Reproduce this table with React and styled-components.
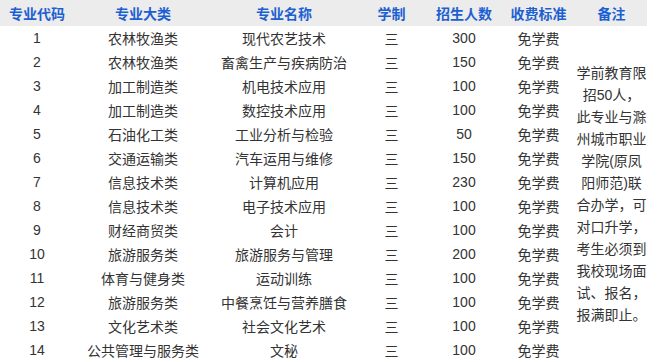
import styled, { createGlobalStyle } from 'styled-components';

const GlobalStyle = createGlobalStyle`
  body {
    margin: 0;
    background: #fff;
    font-family: "Liberation Sans", "Noto Sans CJK SC", sans-serif;
  }
`;

const columns = [
  { title: '专业代码', width: 74 },
  { title: '专业大类', width: 138 },
  { title: '专业名称', width: 144 },
  { title: '学制', width: 71 },
  { title: '招生人数', width: 74 },
  { title: '收费标准', width: 75 },
  { title: '备注', width: 71 }
];

const majors = [
  ['1', '农林牧渔类', '现代农艺技术', '300'],
  ['2', '农林牧渔类', '畜禽生产与疾病防治', '150'],
  ['3', '加工制造类', '机电技术应用', '100'],
  ['4', '加工制造类', '数控技术应用', '100'],
  ['5', '石油化工类', '工业分析与检验', '50'],
  ['6', '交通运输类', '汽车运用与维修', '150'],
  ['7', '信息技术类', '计算机应用', '230'],
  ['8', '信息技术类', '电子技术应用', '100'],
  ['9', '财经商贸类', '会计', '100'],
  ['10', '旅游服务类', '旅游服务与管理', '200'],
  ['11', '体育与健身类', '运动训练', '100'],
  ['12', '旅游服务类', '中餐烹饪与营养膳食', '100'],
  ['13', '文化艺术类', '社会文化艺术', '100'],
  ['14', '公共管理与服务类', '文秘', '100']
];

const remarkLines = [
  '学前教育限',
  '招50人，',
  '此专业与滁',
  '州城市职业',
  '学院(原凤',
  '阳师范)联',
  '合办学，可',
  '对口升学，',
  '考生必须到',
  '我校现场面',
  '试、报名，',
  '报满即止。'
];

export default function App() {
  return (
    <>
      <GlobalStyle />
      <Table>
        <colgroup>
          {columns.map((c) => (
            <col key={c.title} style={{ width: c.width }} />
          ))}
        </colgroup>
        <thead>
          <HeadRow>
            {columns.map((c) => (
              <HeadCell key={c.title}>{c.title}</HeadCell>
            ))}
          </HeadRow>
        </thead>
        <tbody>
          {majors.map(([code, category, name, count], i) => (
            <Row key={code}>
              <Cell>{code}</Cell>
              <Cell>{category}</Cell>
              <Cell>{name}</Cell>
              <Cell>三</Cell>
              <Cell>{count}</Cell>
              <Cell>免学费</Cell>
              {i === 0 && (
                <RemarkCell rowSpan={majors.length}>
                  {remarkLines.map((line) => (
                    <RemarkLine key={line}>{line}</RemarkLine>
                  ))}
                </RemarkCell>
              )}
            </Row>
          ))}
        </tbody>
      </Table>
    </>
  );
}

const Table = styled.table`
  width: 647px;
  table-layout: fixed;
  border-collapse: collapse;
  border-spacing: 0;
`;

const HeadRow = styled.tr`
  height: 26px;
  background: #ececec;
`;

const HeadCell = styled.th`
  padding: 0;
  font-size: 14px;
  font-weight: bold;
  color: #1c5fd2;
  text-align: center;
  white-space: nowrap;
`;

const Row = styled.tr`
  height: 24px;
`;

const Cell = styled.td`
  padding: 0;
  font-size: 14px;
  color: #333;
  text-align: center;
  white-space: nowrap;
`;

const RemarkCell = styled.td`
  padding: 0;
  vertical-align: middle;
  text-align: center;
`;

const RemarkLine = styled.div`
  font-size: 14px;
  line-height: 22px;
  color: #333;
  white-space: nowrap;
`;
